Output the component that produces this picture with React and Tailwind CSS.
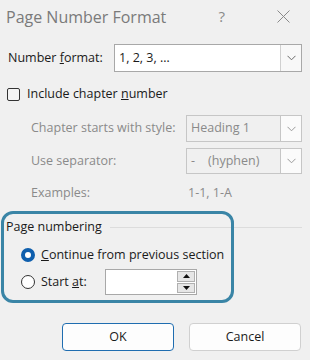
import { Fragment } from 'react';

const font = { fontFamily: '"Open Sans", "Noto Sans", sans-serif' };

function Chevron({ color = '#555' }) {
  return (
    <svg width="9" height="6" viewBox="0 0 9 6" fill="none">
      <path d="M0.5 0.8 L4.5 4.8 L8.5 0.8" stroke={color} strokeWidth="1" />
    </svg>
  );
}

function Select({ value, disabled, className }) {
  return (
    <div
      className={`flex items-stretch border ${disabled ? 'border-[#c6c6c6] bg-[#f0f0f0]' : 'border-[#a8a8a8] bg-white'} ${className}`}
    >
      <div className={`flex flex-1 items-center pl-[4px] ${disabled ? 'text-[#8a8a8a]' : 'text-[#1a1a1a]'}`}>{value}</div>
      <div
        className={`flex w-[21px] items-center justify-center border-l ${disabled ? 'border-[#c6c6c6] bg-[#fbfbfb]' : 'border-[#d0d0d0] bg-[#f8f8f8]'}`}
      >
        <Chevron color={disabled ? '#9a9a9a' : '#6a6a6a'} />
      </div>
    </div>
  );
}

export default function App() {
  return (
    <div style={font} className="relative h-[360px] w-[310px] overflow-hidden bg-[#f0f0f0] text-[12.5px] text-[#1a1a1a]">
      {/* title bar */}
      <div className="flex h-[33px] items-center">
        <span className="pl-[6px] text-[16px] text-[#7a7a7a]">Page Number Format</span>
        <span className="ml-auto mr-[52px] text-[15px] text-[#8a8a8a]">?</span>
        <svg className="mr-[20px]" width="13" height="13" viewBox="0 0 13 13" fill="none">
          <path d="M0.5 0.5 L12.5 12.5 M12.5 0.5 L0.5 12.5" stroke="#8a8a8a" strokeWidth="1" />
        </svg>
      </div>

      {/* number format */}
      <div className="mt-[11px] flex h-[28px] items-center">
        <span className="w-[114px] pl-[8px]">
          Number <span className="underline">f</span>ormat:
        </span>
        <Select value="1, 2, 3, …" className="h-[28px] w-[188px]" />
      </div>

      {/* include chapter */}
      <div className="mt-[14px] flex h-[16px] items-center">
        <div className="ml-[7px] h-[13px] w-[13px] rounded-[2px] border border-[#333] bg-[#f4f4f4]" />
        <span className="ml-[7px]">
          Include chapter <span className="underline">n</span>umber
        </span>
      </div>

      <div className="mt-[13px] flex h-[27px] items-center text-[#8a8a8a]">
        <span className="w-[186px] pl-[31px]">Chapter starts with style:</span>
        <Select value="Heading 1" disabled className="h-[27px] w-[116px]" />
      </div>

      <div className="mt-[6px] flex h-[26px] items-center text-[#8a8a8a]">
        <span className="w-[186px] pl-[31px]">Use separator:</span>
        <Select
          value={
            <Fragment>
              -<span className="ml-[13px]">(hyphen)</span>
            </Fragment>
          }
          disabled
          className="h-[26px] w-[116px]"
        />
      </div>

      <div className="mt-[10px] flex h-[18px] items-center text-[#8a8a8a]">
        <span className="w-[188px] pl-[31px]">Examples:</span>
        <span>1-1, 1-A</span>
      </div>

      {/* page numbering */}
      <div className="mt-[16px] flex h-[18px] items-center">
        <span className="pl-[6px]">Page numbering</span>
        <div className="ml-[8px] mr-[8px] h-px flex-1 bg-[#dcdcdc]" />
      </div>

      <div className="mt-[10px] flex h-[18px] items-center">
        <div className="ml-[21px] h-[14px] w-[14px] rounded-full border-[4px] border-[#0f5fad] bg-white" />
        <span className="ml-[6px]">
          <span className="underline">C</span>ontinue from previous section
        </span>
      </div>

      <div className="mt-[5px] flex h-[26px] items-center">
        <div className="ml-[21px] h-[14px] w-[14px] rounded-full border border-[#333] bg-white" />
        <span className="ml-[6px] w-[64px]">
          Start <span className="underline">a</span>t:
        </span>
        <div className="flex h-[26px] w-[92px] border border-[#a8a8a8] bg-white">
          <div className="flex-1" />
          <div className="m-[1px] flex w-[18px] flex-col gap-[1px]">
            <div className="flex flex-1 items-center justify-center border border-[#b0b0b0] bg-[#e6e6e6]">
              <svg width="7" height="4" viewBox="0 0 7 4">
                <path d="M3.5 0 L7 4 L0 4 Z" fill="#111" />
              </svg>
            </div>
            <div className="flex flex-1 items-center justify-center border border-[#b0b0b0] bg-[#e6e6e6]">
              <svg width="7" height="4" viewBox="0 0 7 4">
                <path d="M0 0 L7 0 L3.5 4 Z" fill="#111" />
              </svg>
            </div>
          </div>
        </div>
      </div>

      {/* buttons */}
      <div className="mt-[28px] flex h-[28px] justify-end gap-[15px] pr-[9px]">
        <button className="w-[112px] rounded-[4px] border border-[#1f6db0] bg-[#fdfdfd] text-[12.5px] text-[#1a1a1a]">OK</button>
        <button className="w-[112px] rounded-[4px] border border-[#d0d0d0] bg-[#fdfdfd] text-[12.5px] text-[#1a1a1a]">Cancel</button>
      </div>

      {/* highlight annotation */}
      <div className="pointer-events-none absolute left-[1px] top-[211px] h-[92px] w-[233px] rounded-[12px] border-[3px] border-[#3a85a6]" />
    </div>
  );
}
